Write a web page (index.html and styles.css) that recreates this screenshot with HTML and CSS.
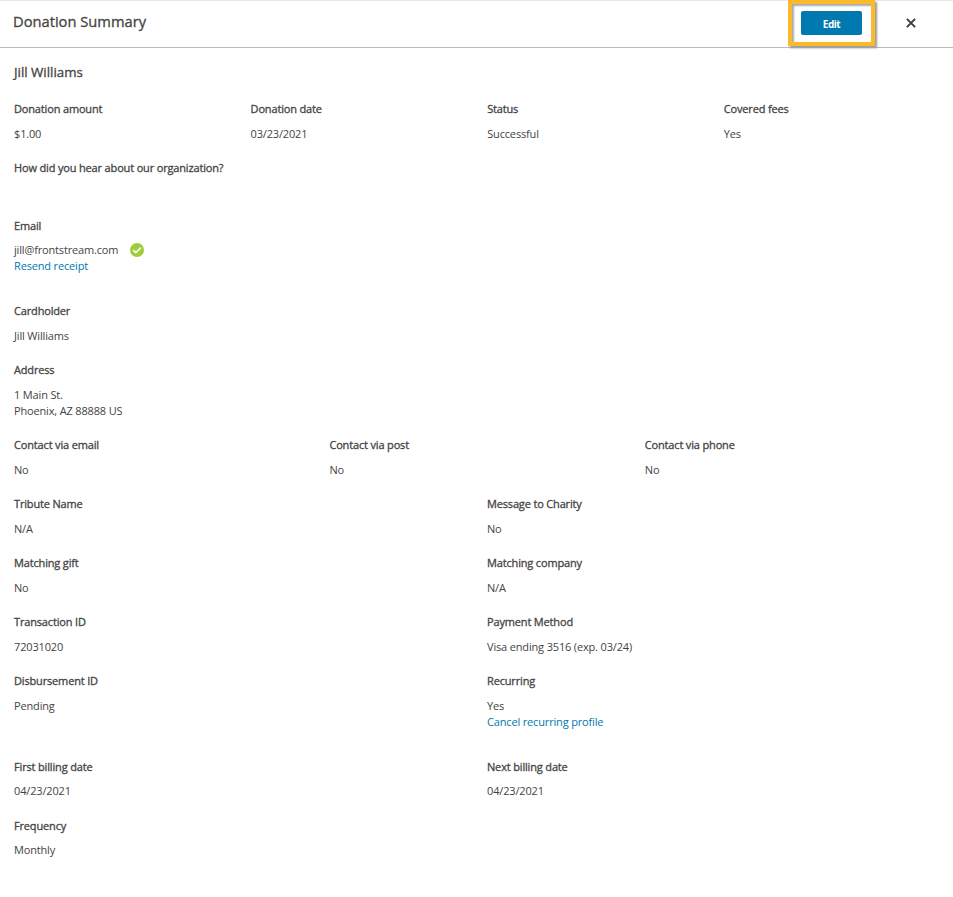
FILE: index.html
```html
<!DOCTYPE html>
<html lang="en">
<head>
<meta charset="utf-8">
<title>Donation Summary</title>
<link rel="stylesheet" href="styles.css">
</head>
<body>
<header class="header">
  <h1 class="title">Donation Summary</h1>
  <div class="highlight"><button class="edit">Edit</button></div>
  <svg class="close" viewBox="0 0 10 10"><path d="M.9.9 9.1 9.1M9.1.9.9 9.1"/></svg>
</header>
<main class="content">
  <h2 class="donor">Jill Williams</h2>
  <section class="row four">
    <div><h3>Donation amount</h3><p>$1.00</p></div>
    <div><h3>Donation date</h3><p>03/23/2021</p></div>
    <div><h3>Status</h3><p>Successful</p></div>
    <div><h3>Covered fees</h3><p>Yes</p></div>
  </section>
  <section class="row question"><div><h3>How did you hear about our organization?</h3></div></section>
  <section class="row email tight"><div><h3>Email</h3>
    <p class="verified">jill@frontstream.com <svg class="check" viewBox="0 0 14 14"><circle cx="7" cy="7" r="7"/><path d="M3.2 7.2 5.8 9.7 10.8 4.6"/></svg></p>
    <a>Resend receipt</a></div></section>
  <section class="row"><div><h3>Cardholder</h3><p>Jill Williams</p></div></section>
  <section class="row address"><div><h3>Address</h3><p>1 Main St.<br>Phoenix, AZ 88888 US</p></div></section>
  <section class="row three">
    <div><h3>Contact via email</h3><p>No</p></div>
    <div><h3>Contact via post</h3><p>No</p></div>
    <div><h3>Contact via phone</h3><p>No</p></div>
  </section>
  <section class="row two">
    <div><h3>Tribute Name</h3><p>N/A</p></div>
    <div><h3>Message to Charity</h3><p>No</p></div>
  </section>
  <section class="row two">
    <div><h3>Matching gift</h3><p>No</p></div>
    <div><h3>Matching company</h3><p>N/A</p></div>
  </section>
  <section class="row two">
    <div><h3>Transaction ID</h3><p>72031020</p></div>
    <div><h3>Payment Method</h3><p>Visa ending 3516 (exp. 03/24)</p></div>
  </section>
  <section class="row two recurring">
    <div><h3>Disbursement ID</h3><p>Pending</p></div>
    <div><h3>Recurring</h3><p>Yes</p><a>Cancel recurring profile</a></div>
  </section>
  <section class="row two tight">
    <div><h3>First billing date</h3><p>04/23/2021</p></div>
    <div><h3>Next billing date</h3><p>04/23/2021</p></div>
  </section>
  <section class="row tight"><div><h3>Frequency</h3><p>Monthly</p></div></section>
</main>
</body>
</html>
```
FILE: styles.css
```css
* { box-sizing: border-box; margin: 0; padding: 0; }
body { background: #fff; color: #444; font: 11px/16px "Open Sans", sans-serif; letter-spacing: -.16px; overflow: hidden; }
.header { display: flex; height: 48px; border-top: 1px solid #e9e9e9; border-bottom: 1px solid #b9b9b9; padding-left: 13px; }
.title { flex: 1; font-size: 14.7px; letter-spacing: 0; line-height: 40px; font-weight: 400; -webkit-text-stroke: .3px #444; }
.highlight { width: 87px; height: 46px; margin-top: -1px; border: 4px solid #fbb92c; padding: 7px 9px; box-shadow: 2px 2px 2px #999, inset 2px 2px 2px #aaa; }
.edit { display: block; width: 61px; height: 24px; border: 0; border-radius: 2px; background: #0078b0; color: #fff; font: 700 10px/27px "Open Sans", sans-serif; letter-spacing: -.5px; }
.close { width: 10px; height: 10px; margin: 17px 37px 0 31px; fill: none; stroke: #3c3c3c; stroke-width: 2; }
.content { padding: 16px 0 0 14px; }
.donor { height: 37px; font-size: 13.3px; letter-spacing: 0; font-weight: 400; -webkit-text-stroke: .3px #444; }
.row { display: grid; height: 59px; }
.four { grid-template-columns: repeat(4, 236.6px); }
.three { grid-template-columns: repeat(3, 315.4px); }
.two { grid-template-columns: repeat(2, 473px); }
h3 { font-size: 11px; line-height: 16px; font-weight: 400; margin-bottom: 9px; -webkit-text-stroke: .3px #444; }
a { color: #0078b0; display: block; }
.tight h3 { margin-bottom: 8px; }
.question { height: 58px; }
.email { height: 85px; }
.address { height: 75px; }
.recurring { height: 86px; }
.verified { display: flex; gap: 12px; }
.check { width: 14px; height: 14px; margin-top: 1px; fill: #9fcc3b; }
.check path { fill: none; stroke: #fff; stroke-width: 1.6; }
```
